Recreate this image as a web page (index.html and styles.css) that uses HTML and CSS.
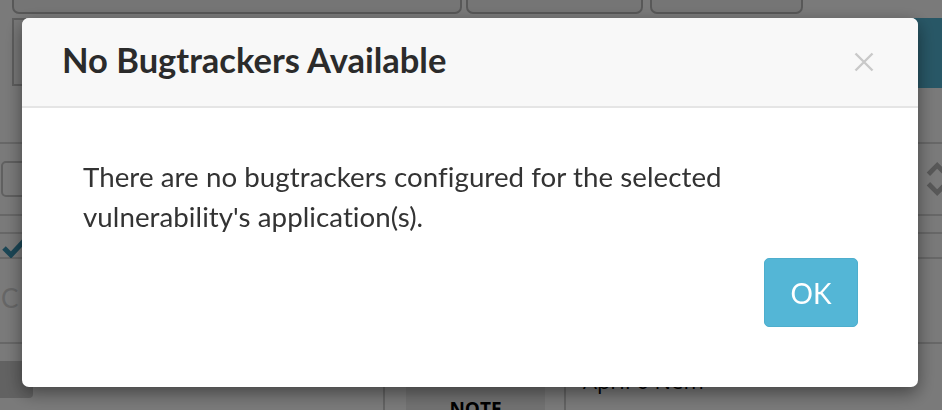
FILE: index.html
```html
<!DOCTYPE html>
<html>
<head>
<meta charset="utf-8">
<link rel="stylesheet" href="styles.css">
</head>
<body>
<div class="page">
  <div class="toolbar">
    <div class="tbtn tb1"></div>
    <div class="tbtn tb2"></div>
    <div class="tbtn tb3"></div>
  </div>
  <div class="filterbar">
    <div class="panel"></div>
    <div class="teal"></div>
  </div>
  <div class="table">
    <div class="tr r1"></div>
    <div class="tr r2">
      <div class="inputbox"></div>
      <div class="chevrons">
        <svg width="20" height="46" viewBox="0 0 20 46"><path d="M3 17 L14 6 L22 14" fill="none" stroke="#b8b8b8" stroke-width="6"/><path d="M3 29 L14 40 L22 32" fill="none" stroke="#b8b8b8" stroke-width="6"/></svg>
      </div>
    </div>
    <div class="tr r3"></div>
    <div class="tr r4">
      <svg class="check" width="22" height="20" viewBox="0 0 22 20"><path d="M2 10 L9 17 L22 3" fill="none" stroke="#3a93b3" stroke-width="5"/></svg>
    </div>
    <div class="tr r5"><span class="cletter">C</span></div>
    <div class="tr r6">
      <div class="col c1"><div class="smallbtn"></div></div>
      <div class="col c2"><div class="notehead">NOTE</div></div>
      <div class="col c3"><span class="date">April 6 Nem</span></div>
    </div>
  </div>
</div>
<div class="backdrop"></div>
<div class="modal">
  <div class="modal-header">
    <h4 class="modal-title">No Bugtrackers Available</h4>
    <button class="close" aria-label="Close">
      <svg width="20" height="20" viewBox="0 0 20 20"><path d="M1.5 1.5 L18.5 18.5 M18.5 1.5 L1.5 18.5" stroke="#c9c9c9" stroke-width="2.4" fill="none"/></svg>
    </button>
  </div>
  <div class="modal-body">
    <p>There are no bugtrackers configured for the selected<br>vulnerability's application(s).</p>
    <div class="actions"><button class="btn-ok">OK</button></div>
  </div>
</div>
</body>
</html>
```
FILE: styles.css
```css
html, body {
  margin: 0;
  padding: 0;
  height: 100%;
  overflow: hidden;
}
body {
  background: #ffffff;
  font-family: Lato, "Open Sans", sans-serif;
  color: #333;
}
.page {
  width: 942px;
  height: 410px;
}
.toolbar {
  display: flex;
  height: 18px;
  padding-left: 12px;
}
.tbtn {
  box-sizing: border-box;
  height: 16px;
  margin-top: -2px;
  background: #f4f4f4;
  border: 2px solid #b8b8b8;
  border-radius: 0 0 7px 7px;
}
.tb1 { width: 450px; }
.tb2 { width: 177px; margin-left: 4px; }
.tb3 { width: 153px; margin-left: 7px; }
.filterbar {
  display: flex;
  height: 70px;
  padding-left: 12px;
}
.panel {
  box-sizing: border-box;
  width: 880px;
  height: 68px;
  border: 2px solid #c4c4c4;
  background: #fafafa;
}
.teal {
  flex: 1;
  background: #55b6d5;
  border-radius: 4px 0 0 4px;
}
.table { display: flex; flex-direction: column; }
.tr {
  box-sizing: border-box;
  border-bottom: 2px solid #d8d8d8;
  display: flex;
  align-items: center;
}
.r1 { height: 56px; }
.r2 { height: 72px; justify-content: space-between; }
.inputbox {
  box-sizing: border-box;
  width: 60px;
  height: 36px;
  margin-left: 1px;
  border: 2px solid #c8c8c8;
  border-radius: 5px;
}
.chevrons { width: 16px; overflow: hidden; display: flex; }
.r3 { height: 18px; }
.r4 { height: 25px; background: #fcfcfc; }
.check { margin-left: 2px; margin-top: 4px; }
.r5 { height: 85px; align-items: flex-start; }
.cletter {
  margin-left: 1px;
  margin-top: 27px;
  font-size: 26px;
  color: #d6d6d6;
  line-height: 24px;
}
.r6 { height: 67px; border-bottom: none; align-items: stretch; }
.col { box-sizing: border-box; }
.c1 { width: 385px; border-right: 2px solid #cfcfcf; padding-top: 17px; }
.smallbtn {
  width: 33px;
  height: 37px;
  background: #cdcdcd;
  border-radius: 0 0 4px 0;
}
.c2 { width: 181px; border-right: 2px solid #cfcfcf; padding-left: 21px; }
.notehead {
  width: 139px;
  height: 100%;
  background: #ededed;
  font-family: "Open Sans", sans-serif;
  font-weight: 700;
  font-size: 19px;
  color: #000;
  text-align: center;
  padding-top: 52px;
  box-sizing: border-box;
}
.c3 { padding-left: 17px; padding-top: 21px; }
.date {
  font-family: "Open Sans", sans-serif;
  font-size: 22px;
  color: #000;
}
.backdrop {
  position: fixed;
  inset: 0;
  background: rgba(0, 0, 0, 0.52);
}
.modal {
  position: fixed;
  left: 22px;
  top: 18px;
  width: 896px;
  height: 369px;
  background: #fff;
  border-radius: 7px;
  overflow: hidden;
  box-shadow: 0 6px 18px rgba(0, 0, 0, 0.45);
}
.modal-header {
  box-sizing: border-box;
  height: 90px;
  background: #f8f8f8;
  border-bottom: 2px solid #e5e5e5;
  display: flex;
  align-items: center;
  justify-content: space-between;
  padding: 0 44px 6px 40px;
}
.modal-title {
  margin: 0;
  font-family: Lato, sans-serif;
  font-weight: 700;
  font-size: 34.5px;
  line-height: 41px;
  color: #2b2b2b;
}
.close {
  background: none;
  border: 0;
  padding: 0;
  margin-top: 6px;
  display: flex;
}
.modal-body {
  padding: 49px 60px 0 61px;
}
.modal-body p {
  margin: 0;
  font-size: 27.7px;
  line-height: 40px;
  letter-spacing: 0.05px;
  color: #333;
}
.actions {
  display: flex;
  justify-content: flex-end;
  margin-top: 21px;
}
.btn-ok {
  width: 94px;
  height: 69px;
  background: #54b6d6;
  border: 1px solid #4eaecd;
  border-radius: 5px;
  color: #fff;
  font-family: Lato, sans-serif;
  font-size: 28px;
  padding: 0;
}
```
